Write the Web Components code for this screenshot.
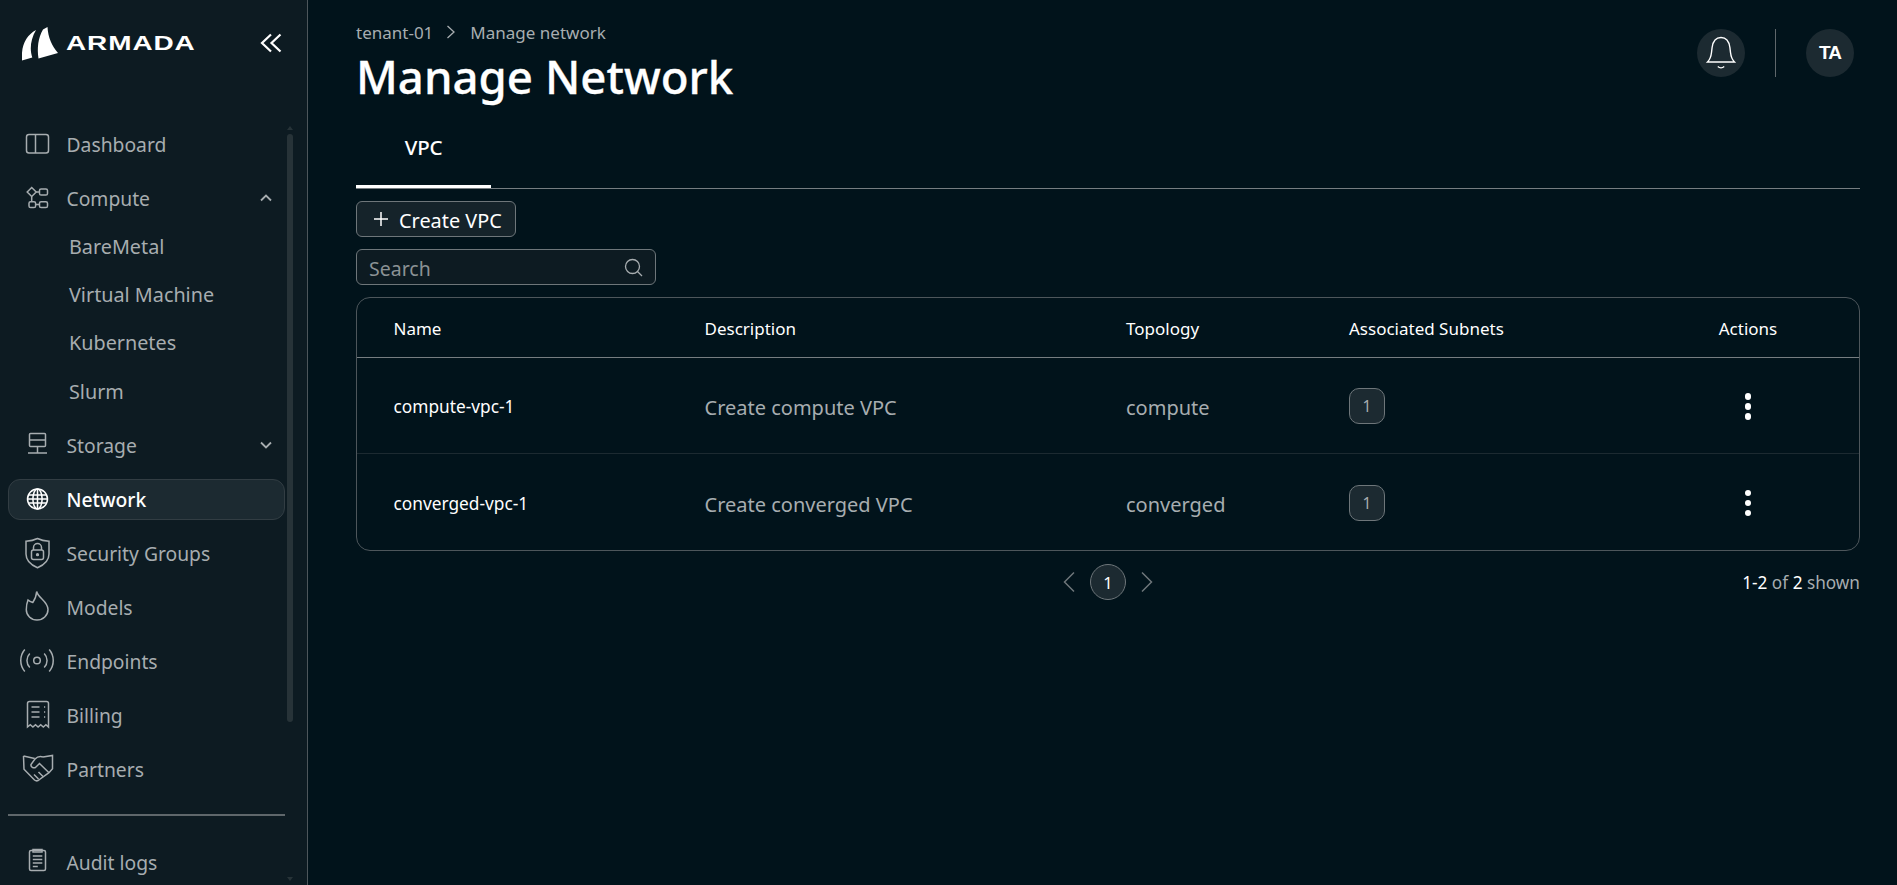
<!DOCTYPE html>
<html lang="en">
<head>
<meta charset="utf-8">
<title>Manage Network</title>
<style>
html,body{margin:0;padding:0;height:100%;background:#01131b;overflow:hidden}
body{font-family:"Noto Sans","Open Sans",sans-serif;color:#fff}
</style>
</head>
<body>
<app-shell>
  <app-sidebar slot="sidebar">
    <nav-item icon="dashboard">Dashboard</nav-item>
    <nav-group>
      <nav-item slot="head" icon="compute" caret="up">Compute</nav-item>
      <sub-item>BareMetal</sub-item>
      <sub-item>Virtual Machine</sub-item>
      <sub-item>Kubernetes</sub-item>
      <sub-item>Slurm</sub-item>
    </nav-group>
    <nav-item icon="storage" caret="down">Storage</nav-item>
    <nav-item icon="network" active>Network</nav-item>
    <nav-item icon="security">Security Groups</nav-item>
    <nav-item icon="models">Models</nav-item>
    <nav-item icon="endpoints">Endpoints</nav-item>
    <nav-item icon="billing">Billing</nav-item>
    <nav-item icon="partners">Partners</nav-item>
    <nav-item slot="footer" icon="audit">Audit logs</nav-item>
  </app-sidebar>
  <page-header></page-header>
  <tab-bar>VPC</tab-bar>
  <create-button>Create VPC</create-button>
  <search-box></search-box>
  <data-table>
    <table-row slot="rows" name="compute-vpc-1" desc="Create compute VPC" topo="compute" count="1"></table-row>
    <table-row slot="rows" name="converged-vpc-1" desc="Create converged VPC" topo="converged" count="1"></table-row>
  </data-table>
  <pager-bar></pager-bar>
</app-shell>

<script>
const ICONS = {
dashboard:`<rect x="8.5" y="10.5" width="22" height="18.5" rx="2.5"/><path d="M17.5 10.5V29"/>`,
compute:`<path d="M13.7 9.5 18.2 14l-4.5 4.5L9.2 14z"/><rect x="21.5" y="11" width="8" height="6" rx="1.6"/><rect x="11" y="23.7" width="6.6" height="5.8" rx="1.6"/><rect x="21.5" y="23.7" width="8" height="5.8" rx="1.6"/><path d="M18.2 14h3.3M13.7 18.5v5.2M17.6 26.6h3.9"/>`,
storage:`<rect x="11.5" y="8.5" width="16" height="13" rx="1"/><path d="M11.5 15h16M19.5 21.5V28M10 28h19"/>`,
network:`<g stroke="#fff" stroke-width="1.5"><circle cx="19.5" cy="20" r="10"/><ellipse cx="19.5" cy="20" rx="4.6" ry="10"/><path d="M19.5 10v20M10 16h19M10 24h19M9.5 20h20"/></g>`,
security:`<path d="M19.5 4.5C16 6.2 12 7 8 7.3V20c0 6.5 5 11 11.5 13.7C26 31 31 26.5 31 20V7.3C27 7 23 6.2 19.5 4.5z"/><rect x="13.5" y="16" width="12" height="9.5" rx="2"/><path d="M15.5 16v-2.5a4 4 0 0 1 8 0V16"/><circle cx="19.5" cy="20.7" r=".9" fill="currentColor"/>`,
models:`<path d="M18.700 3.500C20 10 30 13.500 30 21.500 30 27.500 25 32 19 32 13 32 8.300 27.500 8.300 21.800 8.300 18 8.800 15 10 12c1.500 1.500 3 2 4.800 2.500C17 11.500 18.300 7.500 18.700 3.500z"/>`,
endpoints:`<circle cx="19" cy="18.500" r="3.300"/><path d="M11.800 11.500a10 10 0 0 0 0 14M26.200 11.500a10 10 0 0 1 0 14M6.800 7.500a17 17 0 0 0 0 22M31.200 7.500a17 17 0 0 1 0 22"/>`,
billing:`<path d="M9.500 31V7.500a2 2 0 0 1 2-2h17a2 2 0 0 1 2 2V31l-2.600-2.300-2.600 2.300-2.600-2.300-2.600 2.300-2.600-2.300-2.600 2.300-2.600-2.300z"/><path d="M13.500 11h8M13.500 16h8M13.500 21h8"/><path d="M26 11h1.200M26 16h1.200M26 21h1.200"/>`,
partners:`<path d="M5.500 6 6 19.300l10.500 10.700c1.500 1.200 3.500 1 5-.5l9.500-6.800 3.500-4V5.500L25 7"/><path d="M5.500 6 16.700 8.500"/><path d="M25 7c-3-1-6 0-8 2l-4 5.500c-.5 2.500 2.500 4 4.500 3l4-4L31 22.700"/><path d="M20.500 22l5 5M16 24.500l4.500 4.500"/>`,
audit:`<rect x="11.500" y="8.500" width="16" height="20" rx="1.500"/><path d="M15 7.500h9v2.500h-9z"/><path d="M14.800 14h9.500M14.800 17.500h9.500M14.800 21h9.500M14.800 24.500h5"/>`
};

function define(name, css, html) {
  customElements.define(name, class extends HTMLElement {
    constructor() {
      super();
      this.attachShadow({mode:'open'});
      if (typeof html !== 'function') this.shadowRoot.innerHTML = `<style>${css}</style>${html}`;
    }
    connectedCallback() {
      if (typeof html === 'function') this.shadowRoot.innerHTML = `<style>${css}</style>${html(this)}`;
    }
  });
}

define('app-shell', `
:host{display:grid;grid-template-columns:308px minmax(0,1fr);height:885px;width:1897px;overflow:hidden;background:#01131b}
.main{display:flex;flex-direction:column;padding:0 37px 0 48px;min-width:0}
`, `<slot name="sidebar"></slot><div class="main"><slot></slot></div>`);

define('app-sidebar', `
:host{display:block;position:relative;height:885px;box-sizing:border-box;background:#0d1b22;border-right:1px solid #4d565b;padding-left:8px;overflow:hidden}
.brand{display:flex;align-items:center;justify-content:space-between;height:86px;margin:0 0 37.500px -8px;padding:0 25px 0 22px;width:307px;box-sizing:border-box}
.logo{display:flex;align-items:center;gap:7px}
.logo svg{margin-top:1px}
.word{display:inline-block;font-family:"Liberation Sans",sans-serif;font-weight:700;font-size:21px;line-height:24px;letter-spacing:.7px;color:#fff;transform:scaleX(1.33);transform-origin:left center;margin-top:0}
nav{display:flex;flex-direction:column;gap:13.100px;width:277px}
hr{border:0;height:2px;background:#5f676b;margin:24px 0 25.500px;width:277px}
.bar{position:absolute;left:287px;top:126px;width:6px;height:755px}
.bar i{position:absolute;left:0;top:8px;width:6px;height:588px;background:#273338;border-radius:3px}
.bar b{position:absolute;left:0;border-left:3px solid transparent;border-right:3px solid transparent}
.up{top:0;border-bottom:4px solid #273338}.dn{bottom:0;border-top:4px solid #273338}
svg{display:block}
`, `<div class="brand">
  <div class="logo">
    <svg width="37" height="34" viewBox="22 27 37 34" aria-hidden="true"><path fill="#fff" d="M22 60.500C20.800 46 26 35.500 36 30c-5.500 9.500-6.500 19.500-3.700 27.500z"/><path fill="#fff" d="M47.500 27c.5 10.500 4.500 19 10.500 26l-19.500 5.500C37 48 38 38 43 29.500z"/></svg>
    <span class="word">ARMADA</span>
  </div>
  <svg width="22" height="20" viewBox="0 0 22 20" fill="none" stroke="#fff" stroke-width="2.200" aria-hidden="true"><path d="M11 1.500 2 10l9 8.500M20.500 1.500 11.500 10l9 8.500"/></svg>
</div>
<nav><slot></slot></nav><hr><nav><slot name="footer"></slot></nav>
<div class="bar"><b class="up"></b><i></i><b class="dn"></b></div>`);

define('nav-item', `
:host{display:block;height:41px;box-sizing:border-box;border:1px solid transparent;border-radius:12px;color:#a7adb0;font-size:19.300px}
:host([active]){background:#1c2a31;border-color:#323d43;color:#fff;font-weight:500}
.r{display:flex;align-items:center;height:100%;margin-left:-1px}
svg.i{width:40px;height:40px;margin-left:10px;flex:none;margin-right:8.500px;fill:none;stroke:currentColor;stroke-width:1.500;overflow:visible}
.l{flex:1;white-space:nowrap}
.c{flex:none;width:12px;height:8px;margin-right:12px;fill:none;stroke:#a7adb0;stroke-width:1.800}
`, (el) => {
  const k = el.getAttribute('caret');
  const caret = k ? `<svg class="c" viewBox="0 0 12 8"><path d="${k==='up'?'M1 6.500 6 1.500l5 5':'M1 1.500l5 5 5-5'}"/></svg>` : '';
  return `<div class="r"><svg class="i" viewBox="0 0 40 40" aria-hidden="true">${ICONS[el.getAttribute('icon')]}</svg><span class="l"><slot></slot></span>${caret}</div>`;
});

define('nav-group', `
:host{display:block}
.s{display:flex;flex-direction:column;gap:7.300px;padding-top:7.300px}
`, `<slot name="head"></slot><div class="s"><slot></slot></div>`);

define('sub-item', `
:host{display:flex;align-items:center;height:41px;padding-left:61px;color:#a7adb0;font-size:19.800px;white-space:nowrap}
`, `<slot></slot>`);

define('page-header', `
:host{display:flex;justify-content:space-between;align-items:flex-start;height:110px}
.crumb{display:flex;align-items:center;height:22px;margin-top:21px;font-size:17px;color:#a7adb0;white-space:nowrap}
.crumb svg{width:10px;height:14px;margin:0 14px 0 13px;fill:none;stroke:#a7adb0;stroke-width:1.300}
h1{margin:1px 0 0;font-size:45.600px;line-height:64px;font-weight:500;color:#fff;white-space:nowrap;-webkit-text-stroke:.3px #fff}
.act{display:flex;align-items:center;margin-top:29px;margin-right:6px}
.dot{width:48px;height:48px;border-radius:50%;background:#1c2a31;display:flex;align-items:center;justify-content:center;color:#fff;font:700 19px "Liberation Sans",sans-serif;letter-spacing:-1px}
.sep{width:1px;height:48px;background:#5f676b;margin:0 30px}
svg.b{display:block;fill:none;stroke:#fff;stroke-width:1.400}
`, `<div>
  <div class="crumb"><span>tenant-01</span><svg viewBox="0 0 10 14"><path d="M1.500 1 8 7l-6.500 6"/></svg><span>Manage network</span></div>
  <h1>Manage Network</h1>
</div>
<div class="act">
  <div class="dot"><svg class="b" width="48" height="48" viewBox="0 0 48 48" aria-hidden="true"><path d="M10.500 33h27c-2.500-2.500-3.500-5-4-9.500l-.6-5C32 12 28.800 8.500 24 8.500s-8 3.500-8.900 10l-.6 5c-.5 4.500-1.500 7-4 9.500z"/><path d="M20.800 37.500c1.800 1.600 4.600 1.600 6.400 0"/></svg></div>
  <div class="sep"></div>
  <div class="dot">TA</div>
</div>`);

define('tab-bar', `
:host{display:block;height:79px;box-sizing:border-box;border-bottom:1px solid #767d81}
.t{display:flex;align-items:center;justify-content:center;width:135px;height:78px;box-sizing:border-box;border-bottom:3px solid #fff;margin-bottom:-1px;color:#fff;font-size:20.500px;font-weight:500;letter-spacing:-.2px;padding-bottom:2px}
`, `<div class="t"><slot></slot></div>`);

define('create-button', `
:host{display:flex;align-items:center;align-self:flex-start;width:160px;height:36px;box-sizing:border-box;margin-top:12px;border:1px solid #6e767a;border-radius:6px;background:#15232a;color:#fff;font-size:19.900px;white-space:nowrap;padding:2px 0 0 16px}
svg{width:16px;height:16px;margin:-2px 10px 0 0;flex:none;fill:none;stroke:#fff;stroke-width:1.500}
`, `<svg viewBox="0 0 16 16" aria-hidden="true"><path d="M8 1v14M1 8h14"/></svg><slot></slot>`);

define('search-box', `
:host{display:flex;align-items:center;width:300px;height:36px;box-sizing:border-box;margin-top:12px;border:1px solid #6e767a;border-radius:6px;background:#0d1b22;color:#8b9295;font-size:19.500px;padding:0 12px}
.p{flex:1;padding-top:3px}
svg{width:19px;height:19px;fill:none;stroke:#a7adb0;stroke-width:1.300}
`, `<span class="p">Search</span><svg viewBox="0 0 19 19" aria-hidden="true"><circle cx="8.500" cy="8.500" r="7"/><path d="M13.500 13.500l4.500 4.500"/></svg>`);

define('data-table', `
:host{display:block;margin-top:12px;height:254px;box-sizing:border-box;border:1px solid #4d565b;border-radius:14px;overflow:hidden}
.h{display:grid;grid-template-columns:347.500px 421.500px 223px 340px 118px;height:60px;box-sizing:border-box;border-bottom:1px solid #767d81;align-items:center;color:#fff;font-size:17px;padding-top:2px}
.h span:first-child{padding-left:36.500px}
.h span:last-child{text-align:center}
`, `<div class="h"><span>Name</span><span>Description</span><span>Topology</span><span>Associated Subnets</span><span>Actions</span></div><slot name="rows"></slot>`);

define('table-row', `
:host{display:grid;grid-template-columns:347.500px 421.500px 223px 340px 118px;height:96px;box-sizing:border-box;border-bottom:1px solid #1c2a31;align-items:center;color:#a7adb0;font-size:20px;white-space:nowrap}
:host(:last-of-type){border-bottom:0}
.n{padding-left:36.500px;color:#fff;font-size:17.300px;margin-top:2px}
.d{margin-top:4px}
.w{display:flex}
.bd{display:flex;align-items:center;justify-content:center;width:36px;height:36px;box-sizing:border-box;border:1px solid #6e767a;border-radius:10px;background:#1c2a31;color:#a7adb0;font-size:15.500px;margin-top:1.500px}
.k{display:flex;flex-direction:column;align-items:center;gap:3.500px;margin-top:1.500px}
.k i{width:6.500px;height:6.500px;border-radius:50%;background:#fff}
`, (el) => `<span class="n">${el.getAttribute('name')}</span><span class="d">${el.getAttribute('desc')}</span><span class="d">${el.getAttribute('topo')}</span><div class="w"><span class="bd">${el.getAttribute('count')}</span></div><div class="k"><i></i><i></i><i></i></div>`);

define('pager-bar', `
:host{display:grid;grid-template-columns:1fr auto 1fr;align-items:center;height:36px;margin-top:13px}
.m{display:flex;align-items:center;gap:15px}
svg{width:12px;height:22px;fill:none;stroke:#6e767a;stroke-width:1.500}
.p{display:flex;align-items:center;justify-content:center;width:36px;height:36px;box-sizing:border-box;border:1px solid #6e767a;border-radius:50%;background:#1c2a31;color:#fff;font-size:16.500px}
.s{text-align:right;font-size:17.200px;color:#a7adb0;white-space:nowrap}
.s b{font-weight:400;color:#fff}
`, `<span></span>
<div class="m"><svg viewBox="0 0 12 22" aria-hidden="true"><path d="M11 1.500 1.500 11l9.500 9.500"/></svg><span class="p">1</span><svg viewBox="0 0 12 22" aria-hidden="true"><path d="M1 1.500 10.500 11 1 20.500"/></svg></div>
<div class="s"><b>1-2</b> of <b>2</b> shown</div>`);
</script>
</body>
</html>
